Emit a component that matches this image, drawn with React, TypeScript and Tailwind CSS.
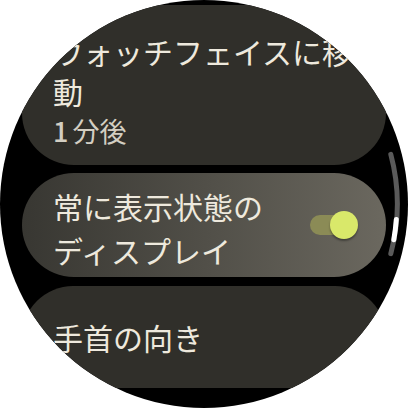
import React from "react";

const FONT = "font-['Noto_Sans_CJK_JP','Noto_Sans',sans-serif]";

// scroll indicator arc along the right bezel
function ScrollIndicator() {
  return (
    <svg className="absolute inset-0 pointer-events-none" width={408} height={408} viewBox="0 0 408 408">
      <path
        d="M 390.8 154.4 A 193 193 0 0 1 390.8 253.6"
        fill="none"
        stroke="#5a5a5a"
        strokeWidth={5}
        strokeLinecap="round"
      />
      <path
        d="M 396.3 219.5 A 193 193 0 0 1 393.8 239.8"
        fill="none"
        stroke="#ffffff"
        strokeWidth={5}
        strokeLinecap="round"
      />
    </svg>
  );
}

function Toggle() {
  return (
    <div className="relative w-[48px] h-[28px] shrink-0">
      <div className="absolute left-0 top-[4px] w-[40px] h-[20px] rounded-full bg-[#8b8b56]" />
      <div className="absolute right-0 top-0 w-[28px] h-[28px] rounded-full bg-[#d9e86a] shadow-[0_2px_2px_rgba(0,0,0,0.35)]" />
    </div>
  );
}

export default function App() {
  return (
    <div className={`w-[408px] h-[408px] bg-white ${FONT}`}>
      <div className="relative w-[408px] h-[408px] rounded-full bg-black overflow-hidden">
        <div className="flex flex-col px-[22px] pt-[5px]">
          {/* screen timeout chip */}
          <div className="h-[160px] rounded-[52px] bg-[#302f2a] pl-[31px] pr-[30px] pt-[26px]">
            <p className="text-[30px] leading-[40px] text-[#eee9dd] whitespace-nowrap">
              ウォッチフェイスに移
              <br />
              動
            </p>
            <p className="mt-[3px] text-[27px] leading-[34px] text-[#d3cec2]">
              <span className="mr-[4px] font-medium">1</span>分後
            </p>
          </div>

          {/* always-on display toggle chip */}
          <div className="mt-[8px] h-[104px] rounded-full bg-linear-to-r from-[#383732] to-[#6b685f] flex items-center pl-[31px] pr-[28px] pt-[6px]">
            <p className="flex-1 text-[30px] leading-[44px] text-[#eee9dd] whitespace-nowrap">
              常に表示状態の
              <br />
              ディスプレイ
            </p>
            <div className="-mt-[6px]">
              <Toggle />
            </div>
          </div>

          {/* wrist orientation chip */}
          <div className="mt-[9px] h-[102px] rounded-[52px] bg-[#302f2a] flex items-center pl-[31px]">
            <p className="text-[30px] leading-[40px] text-[#eee9dd]">手首の向き</p>
          </div>
        </div>
        <ScrollIndicator />
      </div>
    </div>
  );
}
